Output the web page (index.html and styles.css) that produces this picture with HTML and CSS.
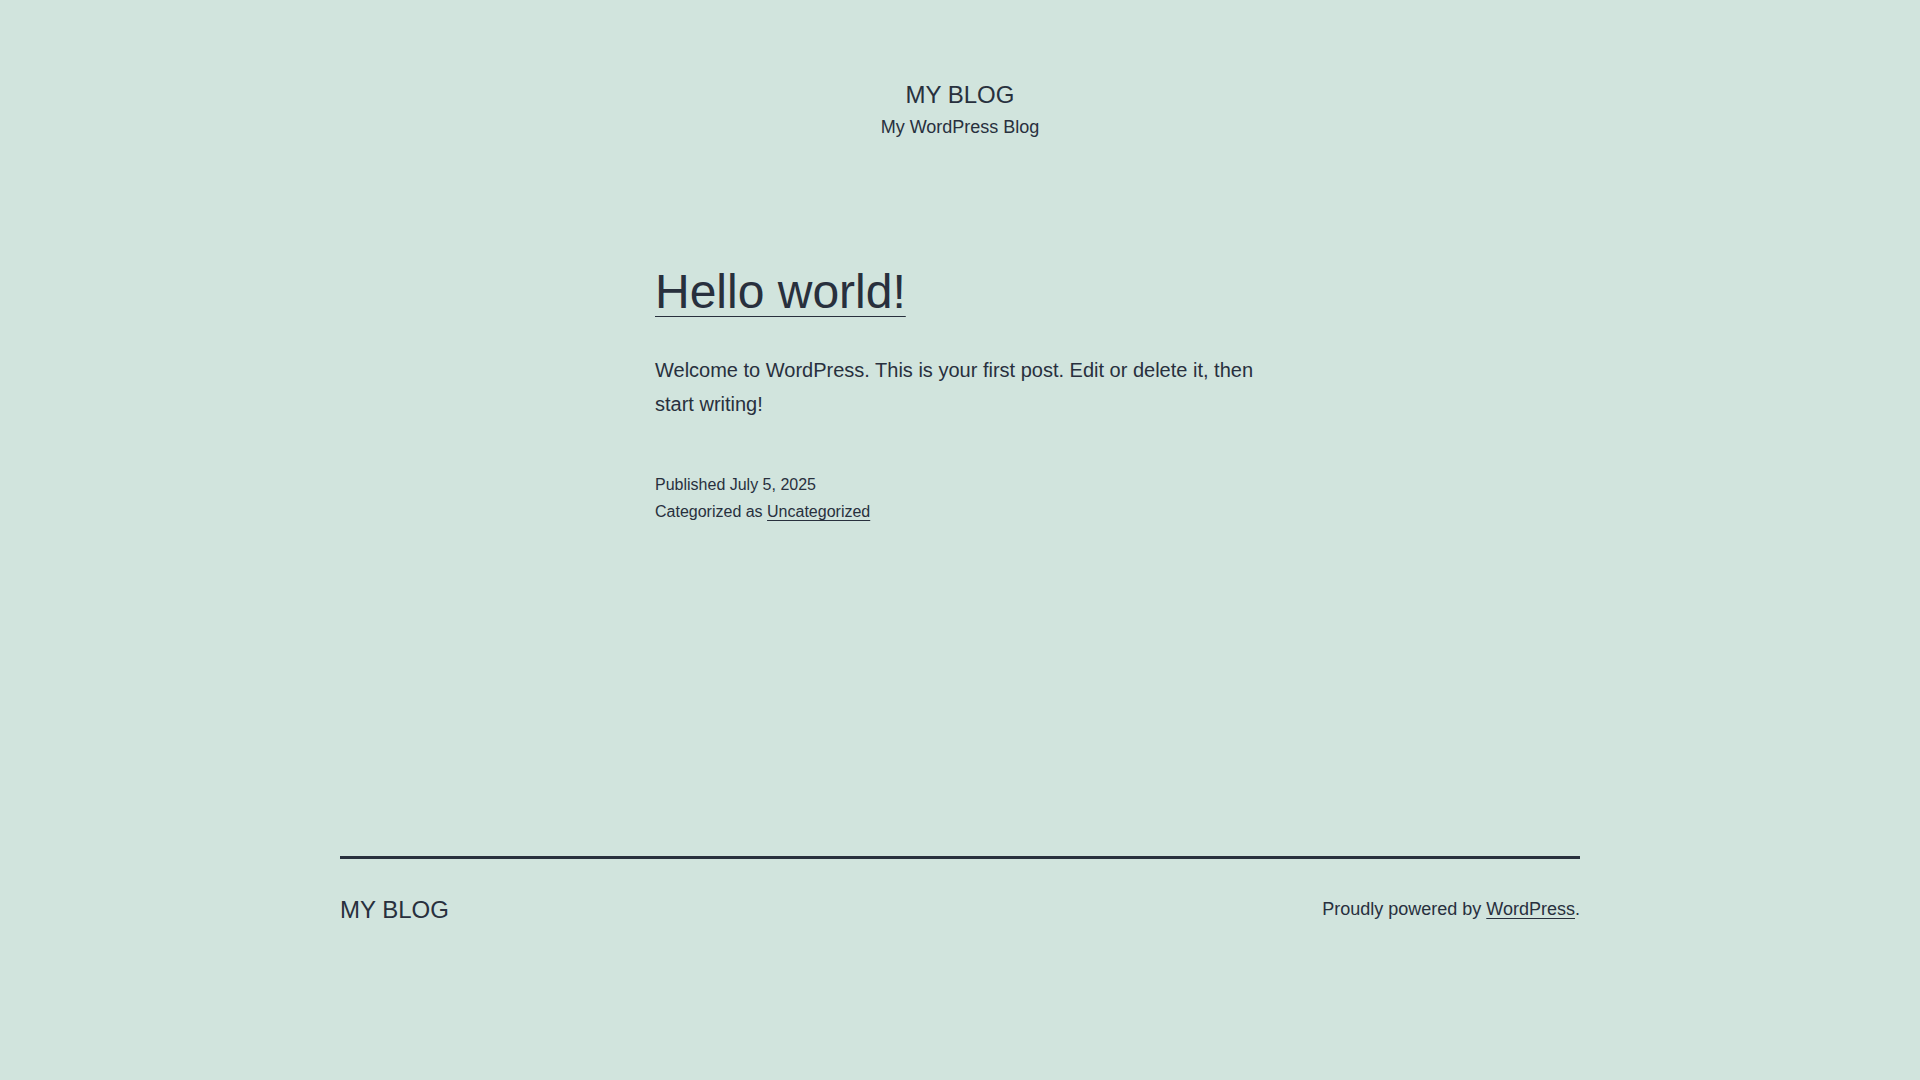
FILE: index.html
```html
<!DOCTYPE html>
<html lang="en">
<head>
<meta charset="utf-8">
<title>My Blog</title>
<link rel="stylesheet" href="styles.css">
</head>
<body>
<div class="site">
  <header class="site-header">
    <p class="site-title">MY BLOG</p>
    <p class="site-description">My WordPress Blog</p>
  </header>
  <main class="site-main">
    <article class="post">
      <h2 class="entry-title"><a href="#">Hello world!</a></h2>
      <div class="entry-content">
        <p>Welcome to WordPress. This is your first post. Edit or delete it, then start writing!</p>
      </div>
      <footer class="entry-footer">
        <span class="meta-line">Published July 5, 2025</span>
        <span class="meta-line">Categorized as <a href="#">Uncategorized</a></span>
      </footer>
    </article>
  </main>
  <footer class="site-footer">
    <p class="footer-title">MY BLOG</p>
    <p class="powered-by">Proudly powered by <a href="#">WordPress</a>.</p>
  </footer>
</div>
</body>
</html>
```

FILE: styles.css
```css
html, body {
  margin: 0;
  padding: 0;
  background: #d1e4dd;
}

body {
  color: #28303d;
  font-family: "Liberation Sans", Arial, sans-serif;
}

a {
  color: #28303d;
}

.site {
  min-height: 1080px;
}

.site-header {
  padding-top: 79px;
  text-align: center;
}

.site-title {
  margin: 0;
  font-size: 24px;
  line-height: 31px;
  text-transform: uppercase;
}

.site-description {
  margin: 5px 0 0;
  font-size: 18px;
  line-height: 25px;
}

.site-main {
  width: 610px;
  margin: 121px auto 0;
}

.entry-title {
  margin: 0;
  font-size: 48px;
  font-weight: 400;
  line-height: 62px;
}

.entry-title a {
  text-decoration-thickness: 1px;
  text-underline-offset: 8px;
}

.entry-content p {
  margin: 30px 0 0;
  font-size: 20px;
  line-height: 34px;
}

.entry-footer {
  margin-top: 50px;
  display: flex;
  flex-direction: column;
  font-size: 16px;
  line-height: 27px;
}

.entry-footer a {
  text-decoration-thickness: 1px;
  text-underline-offset: 3px;
}

.site-footer {
  width: 1240px;
  margin: 331px auto 0;
  border-top: 3px solid #28303d;
  padding-top: 35px;
  display: flex;
  justify-content: space-between;
  align-items: flex-start;
}

.footer-title {
  margin: 0;
  font-size: 24px;
  line-height: 31px;
}

.powered-by {
  margin: 3px 0 0;
  font-size: 18px;
  line-height: 25px;
}

.powered-by a {
  text-decoration-thickness: 1px;
  text-underline-offset: 3px;
}
```
